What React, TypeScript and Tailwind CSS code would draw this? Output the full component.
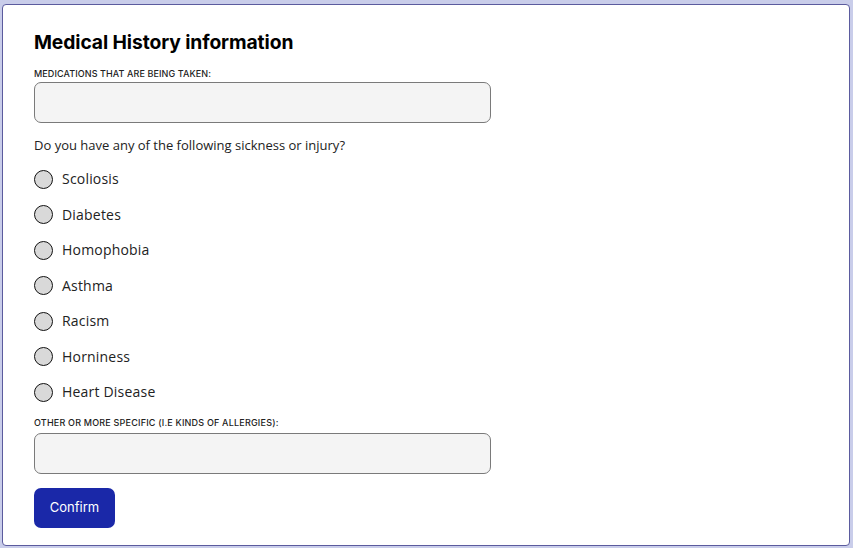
import React from "react";

const items = ["Scoliosis", "Diabetes", "Homophobia", "Asthma", "Racism", "Horniness", "Heart Disease"];

export default function App() {
  return (
    <div className="w-[853px] h-[548px] bg-[#c9cdea] pt-[4px] pl-[2px] pr-[3px] pb-[2px]" style={{ fontFamily: "Inter, 'Liberation Sans', sans-serif" }}>
      <div className="h-full w-full bg-white border border-[#5b5b9e] rounded-[4px] pl-[31px] pt-[23px]">
        <h1 className="text-[19.3px] leading-[28px] font-bold text-black tracking-[-0.1px]">Medical History information</h1>
        <div className="mt-[12px] text-[9px] leading-[12px] font-medium text-[#222] uppercase tracking-[0.1px]">Medications that are being taken:</div>
        <div className="mt-[2px] w-[457px] h-[41px] bg-[#f4f4f4] border border-[#7a7a7a] rounded-[7px]" />
        <p className="mt-[13px] text-[13px] leading-[18px] text-[#222]" style={{ fontFamily: "'Open Sans', Inter, sans-serif" }}>Do you have any of the following sickness or injury?</p>
        <div className="mt-[16px] flex flex-col gap-[17.5px]">
          {items.map((it) => (
            <label key={it} className="flex items-center gap-[9px] h-[18px]">
              <span className="w-[19px] h-[19px] rounded-full bg-[#d9d9d9] border-[1.5px] border-[#111] shrink-0" />
              <span className="text-[14px] leading-[18px] text-[#222] tracking-[0.2px]" style={{ fontFamily: "'Open Sans', Inter, sans-serif" }}>{it}</span>
            </label>
          ))}
        </div>
        <div className="mt-[16px] text-[9px] leading-[12px] font-medium text-[#222] uppercase tracking-[0.2px]">Other or more specific (i.e kinds of allergies):</div>
        <div className="mt-[4px] w-[457px] h-[41px] bg-[#f4f4f4] border border-[#7a7a7a] rounded-[7px]" />
        <button className="mt-[14px] w-[81px] h-[40px] bg-[#1a28a8] rounded-[7px] text-white text-[13px] flex items-center justify-center">Confirm</button>
      </div>
    </div>
  );
}
